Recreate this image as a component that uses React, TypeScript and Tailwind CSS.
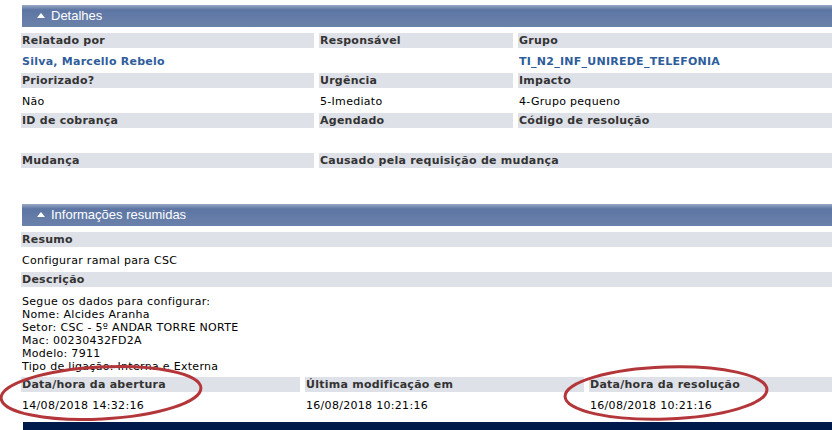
const font = { fontFamily: '"DejaVu Sans", Verdana, sans-serif' };

function SectionHeader({ title }: { title: string }) {
  return (
    <div className="ml-[1px] flex h-[22px] items-center bg-[linear-gradient(to_bottom,#9aa9c6_0%,#5d75a3_22%,#6a82aa_100%)] pl-[15px] text-[13px] text-white [font-family:'Liberation_Sans',Arial,sans-serif]">
      <svg width="8" height="5" viewBox="0 0 8 5" className="mr-[6px] mt-[-1px]">
        <path d="M0 5 L4 0 L8 5 Z" fill="#ffffff" />
      </svg>
      {title}
    </div>
  );
}

function Label({ children }: { children?: React.ReactNode }) {
  return (
    <div className="flex h-[15px] items-center whitespace-nowrap bg-[#dfe1e8] pl-[1px] pt-[1px] text-[11px] font-bold tracking-[0.25px] text-[#333]">
      {children}
    </div>
  );
}

function Value({ children, link }: { children?: React.ReactNode; link?: boolean }) {
  return (
    <div
      className={`flex h-[25px] items-center whitespace-nowrap pl-[1px] pt-[3px] text-[11px] ${
        link ? "font-bold tracking-[0.25px] text-[#2f5d9b]" : "tracking-[0.3px] text-black"
      }`}
    >
      {children}
    </div>
  );
}

export default function App() {
  const descricao = [
    "Segue os dados para configurar:",
    "Nome: Alcides Aranha",
    "Setor: CSC - 5º ANDAR TORRE NORTE",
    "Mac: 00230432FD2A",
    "Modelo: 7911",
    "Tipo de ligação: Interna e Externa",
  ];

  return (
    <div className="relative h-[430px] w-[832px] overflow-hidden bg-white" style={font}>
      <div className="pl-[21px] pt-[5px]">
        <SectionHeader title="Detalhes" />

        <div className="mt-[6px] grid grid-cols-[293px_194px_1fr] gap-x-[5px]">
          <Label>Relatado por</Label>
          <Label>Responsável</Label>
          <Label>Grupo</Label>
          <Value link>Silva, Marcello Rebelo</Value>
          <Value />
          <Value link>TI_N2_INF_UNIREDE_TELEFONIA</Value>

          <Label>Priorizado?</Label>
          <Label>Urgência</Label>
          <Label>Impacto</Label>
          <Value>Não</Value>
          <Value>5-Imediato</Value>
          <Value>4-Grupo pequeno</Value>

          <Label>ID de cobrança</Label>
          <Label>Agendado</Label>
          <Label>Código de resolução</Label>
          <Value />
          <Value />
          <Value />
        </div>

        <div className="grid grid-cols-[293px_1fr] gap-x-[5px]">
          <Label>Mudança</Label>
          <Label>Causado pela requisição de mudança</Label>
          <Value />
          <Value />
        </div>

        <div className="mt-[11px]">
          <SectionHeader title="Informações resumidas" />
        </div>

        <div className="mt-[6px]">
          <Label>Resumo</Label>
          <Value>Configurar ramal para CSC</Value>
          <Label>Descrição</Label>
          <div className="h-[90px] pl-[1px] pt-[8px] text-[11px] leading-[13px] tracking-[0.3px] text-black">
            {descricao.map((line) => (
              <div key={line}>{line}</div>
            ))}
          </div>
        </div>

        <div className="grid grid-cols-[279px_279px_1fr] gap-x-[5px]">
          <Label>Data/hora da abertura</Label>
          <Label>Última modificação em</Label>
          <Label>Data/hora da resolução</Label>
          <Value>14/08/2018 14:32:16</Value>
          <Value>16/08/2018 10:21:16</Value>
          <Value>16/08/2018 10:21:16</Value>
        </div>

        <div className="ml-[2px] mt-[5px] h-[10px] bg-[#001a4b]" />
      </div>

      <svg className="pointer-events-none absolute left-0 top-0" width="832" height="430">
        <ellipse cx="101" cy="393" rx="100" ry="26" fill="none" stroke="#b3373a" strokeWidth="3" transform="rotate(-3 101 393)" />
        <ellipse cx="666" cy="393" rx="101" ry="26" fill="none" stroke="#b3373a" strokeWidth="3" transform="rotate(-2 666 393)" />
      </svg>
    </div>
  );
}
